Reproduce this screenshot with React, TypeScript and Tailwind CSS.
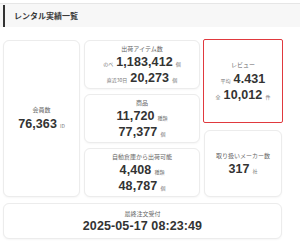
import React from 'react';

const jp = "font-['Noto_Sans_CJK_JP','Noto_Sans',sans-serif]";
const num = "font-['Liberation_Sans','Noto_Sans_CJK_JP',sans-serif]";

const Card: React.FC<{ className?: string; children: React.ReactNode }> = ({ className = '', children }) => (
  <div
    className={`flex flex-col items-center justify-center rounded-[6px] border border-[#ececec] bg-white shadow-[0_1px_2px_rgba(0,0,0,0.04)] ${className}`}
  >
    {children}
  </div>
);

const Label: React.FC<{ children: React.ReactNode }> = ({ children }) => (
  <div className={`${jp} text-[6px] leading-[8px] text-[#666]`}>{children}</div>
);

const Value: React.FC<{ pre?: string; value: string; unit?: string }> = ({ pre, value, unit }) => (
  <div className="flex items-baseline gap-[3px] leading-none">
    {pre && <span className={`${jp} text-[5px] text-[#777]`}>{pre}</span>}
    <span className={`${num} text-[12.5px] font-bold tracking-[0.1px] text-[#333]`}>{value}</span>
    {unit && <span className={`${jp} text-[5px] text-[#777]`}>{unit}</span>}
  </div>
);

export default function App() {
  return (
    <div className="h-[242px] w-[300px] bg-white">
      {/* Title */}
      <div className="pt-[3px]">
        <div className="flex h-[24px] items-center border-t border-[#e6e6e6] bg-[#f7f7f7]">
          <div className="ml-[3px] h-[22px] w-[2px] bg-[#333]" />
          <span className={`${jp} ml-[9px] text-[8px] font-bold text-[#3a3a3a]`}>レンタル実績一覧</span>
        </div>
      </div>

      <div className="mt-[13px] px-[3px]">
        <div className="flex h-[157px] gap-[4px]">
          <Card className="w-[77px]">
            <Label>会員数</Label>
            <div className="mt-[4px]">
              <Value value="76,363" unit="ID" />
            </div>
          </Card>

          <div className="flex w-[116px] flex-col gap-[5px]">
            <Card className="flex-1 gap-[3px]">
              <Label>出荷アイテム数</Label>
              <Value pre="のべ" value="1,183,412" unit="個" />
              <Value pre="直近30日" value="20,273" unit="個" />
            </Card>
            <Card className="flex-1 gap-[3px]">
              <Label>商品</Label>
              <Value value="11,720" unit="種類" />
              <Value value="77,377" unit="個" />
            </Card>
            <Card className="flex-1 gap-[3px]">
              <Label>自動倉庫から出荷可能</Label>
              <Value value="4,408" unit="種類" />
              <Value value="48,787" unit="個" />
            </Card>
          </div>

          <div className="flex w-[78px] flex-col gap-[7px]">
            <div className="h-[84px] -mx-[1px] -mt-[1px] rounded-[2px] border-[1.5px] border-[#e0393e] p-[1px]">
              <Card className="h-full gap-[4px] border-transparent shadow-none">
                <Label>レビュー</Label>
                <Value pre="平均" value="4.431" />
                <Value pre="全" value="10,012" unit="件" />
              </Card>
            </div>
            <Card className="flex-1 gap-[3px]">
              <Label>取り扱いメーカー数</Label>
              <Value value="317" unit="社" />
            </Card>
          </div>
        </div>

        <Card className="mt-[6px] h-[36px] w-[279px] gap-[2px]">
          <Label>最終注文受付</Label>
          <Value value="2025-05-17 08:23:49" />
        </Card>
      </div>
    </div>
  );
}
